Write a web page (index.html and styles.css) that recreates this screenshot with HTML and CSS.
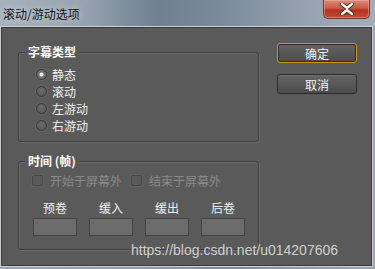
FILE: index.html
```html
<!DOCTYPE html>
<html lang="zh-CN">
<head>
    <meta charset="UTF-8">
    <meta name="viewport" content="width=device-width, initial-scale=1.0">
    <title>滚动/游动选项</title>
    <link rel="stylesheet" href="styles.css">
</head>
<body>
    <div class="window">
        <div class="titlebar">
            <span class="title">滚动/游动选项</span>
            <button class="close" aria-label="关闭">
                <svg width="16" height="12" viewBox="0 0 16 12">
                    <path d="M3 1 L8 5 L13 1 M3 11 L8 7 L13 11" stroke="#3a2a2a" stroke-width="4.2" fill="none" stroke-linecap="round"/>
                    <path d="M3 1 L8 5 L13 1 M3 11 L8 7 L13 11 M8 5 L8 7" stroke="#ffffff" stroke-width="2.4" fill="none" stroke-linecap="round"/>
                </svg>
            </button>
        </div>
        <div class="client">
            <div class="left-panel">
                <div class="group group-type">
                    <span class="group-title">字幕类型</span>
                    <label class="radio-row"><span class="radio checked"></span>静态</label>
                    <label class="radio-row"><span class="radio"></span>滚动</label>
                    <label class="radio-row"><span class="radio"></span>左游动</label>
                    <label class="radio-row"><span class="radio"></span>右游动</label>
                </div>
                <div class="group group-time">
                    <span class="group-title">时间 (帧)</span>
                    <div class="check-line">
                        <label class="check-row"><span class="check"></span>开始于屏幕外</label>
                        <label class="check-row"><span class="check"></span>结束于屏幕外</label>
                    </div>
                    <div class="fields">
                        <div class="field"><span class="field-label">预卷</span><span class="field-box"></span></div>
                        <div class="field"><span class="field-label">缓入</span><span class="field-box"></span></div>
                        <div class="field"><span class="field-label">缓出</span><span class="field-box"></span></div>
                        <div class="field"><span class="field-label">后卷</span><span class="field-box"></span></div>
                    </div>
                </div>
            </div>
            <div class="right-panel">
                <button class="btn default">确定</button>
                <button class="btn">取消</button>
            </div>
            <div class="watermark">https://blog.csdn.net/u014207606</div>
        </div>
    </div>
</body>
</html>
```

FILE: styles.css
```css
body {
    margin: 0;
    width: 375px;
    height: 269px;
    overflow: hidden;
    font-family: "Noto Sans CJK SC", "Liberation Sans", sans-serif;
    font-size: 12px;
    background: linear-gradient(90deg, #9aa5b1 0%, #8e9aa7 40%, #7f8d9c 60%, #9aa5b1 100%);
}
.window {
    height: 269px;
    display: flex;
    flex-direction: column;
}
.titlebar {
    height: 27px;
    display: flex;
    align-items: flex-start;
    justify-content: space-between;
    background: linear-gradient(90deg, #a7b2bd 0%, #97a3b0 22%, #6f8093 42%, #7a8a9c 58%, #95a1ae 80%, #a3aeb9 100%);
}
.title {
    margin: 6px 0 0 3px;
    color: #111;
    line-height: 16px;
    text-shadow: 0 0 6px rgba(255, 255, 255, 0.7);
}
.close {
    width: 47px;
    height: 19px;
    margin-right: 5px;
    padding: 0;
    border: 1px solid #6b3b33;
    border-top: none;
    border-radius: 0 0 5px 5px;
    background: linear-gradient(#d98a76 0%, #cc5a42 45%, #b3321d 55%, #c44b33 100%);
    box-shadow: inset 0 0 0 1px rgba(255, 200, 190, 0.4);
    display: flex;
    align-items: center;
    justify-content: center;
}
.client {
    position: relative;
    flex: 1;
    margin: 0 3px 3px 1px;
    background: #5a5a5a;
    border: 1px solid #3b3b3b;
    box-shadow: 0 0 0 1px #c9cfd6;
    display: flex;
    color: #f0f0f0;
}
.left-panel {
    width: 241px;
    padding: 24px 0 0 16px;
    display: flex;
    flex-direction: column;
    gap: 19px;
}
.group {
    border: 1px solid #3e3e3e;
    border-radius: 3px;
    box-shadow: inset 1px 1px 0 #6b6b6b, 1px 1px 0 #6b6b6b;
    display: flex;
    flex-direction: column;
}
.group-title {
    align-self: flex-start;
    margin: -9px 0 0 6px;
    padding: 0 3px;
    background: #5a5a5a;
    font-weight: bold;
    line-height: 16px;
    color: #fff;
}
.group-type {
    height: 88px;
}
.radio-row {
    display: flex;
    align-items: center;
    height: 17px;
    padding-left: 17px;
    gap: 5px;
    line-height: 17px;
}
.group-type .radio-row:first-of-type {
    margin-top: 6px;
}
.radio {
    width: 9px;
    height: 9px;
    border-radius: 50%;
    border: 1px solid #3a3a3a;
    background: radial-gradient(circle at 50% 40%, #6e6e6e, #505050);
    box-shadow: 0 0 0 1px #666;
}
.radio.checked {
    background: radial-gradient(circle, #e8e8e8 0 1.6px, #777 2.4px, #5c5c5c 100%);
}
.group-time {
    height: 87px;
}
.check-line {
    display: flex;
    gap: 9px;
    margin-top: 3px;
    padding-left: 13px;
}
.check-row {
    display: flex;
    align-items: center;
    gap: 7px;
    height: 16px;
    color: #8a8a8a;
}
.check {
    width: 9px;
    height: 9px;
    border: 1px solid #474747;
    border-radius: 2px;
    box-shadow: 0 0 0 1px #626262;
}
.fields {
    display: flex;
    gap: 12px;
    margin-top: 12px;
    padding-left: 14px;
}
.field {
    display: flex;
    flex-direction: column;
    align-items: center;
    gap: 2px;
}
.field-label {
    line-height: 16px;
}
.field-box {
    width: 42px;
    height: 16px;
    background: #6c6c6c;
    border: 1px solid #444;
}
.right-panel {
    padding: 15px 0 0 18px;
    display: flex;
    flex-direction: column;
    gap: 11px;
}
.btn {
    width: 80px;
    height: 20px;
    padding: 0;
    font-family: inherit;
    font-size: 12px;
    color: #f2f2f2;
    border: 1px solid #2c2c2c;
    border-radius: 3px;
    background: linear-gradient(#646464, #4c4c4c);
    box-shadow: inset 0 1px 0 #707070;
}
.btn.default {
    border: 1px solid #d39a10;
    box-shadow: inset 0 0 0 1px #2c2c2c;
}
.watermark {
    position: absolute;
    left: 129px;
    top: 214px;
    font-family: "Liberation Sans", sans-serif;
    font-size: 14px;
    line-height: 16px;
    color: #d0d0d0;
}
```
